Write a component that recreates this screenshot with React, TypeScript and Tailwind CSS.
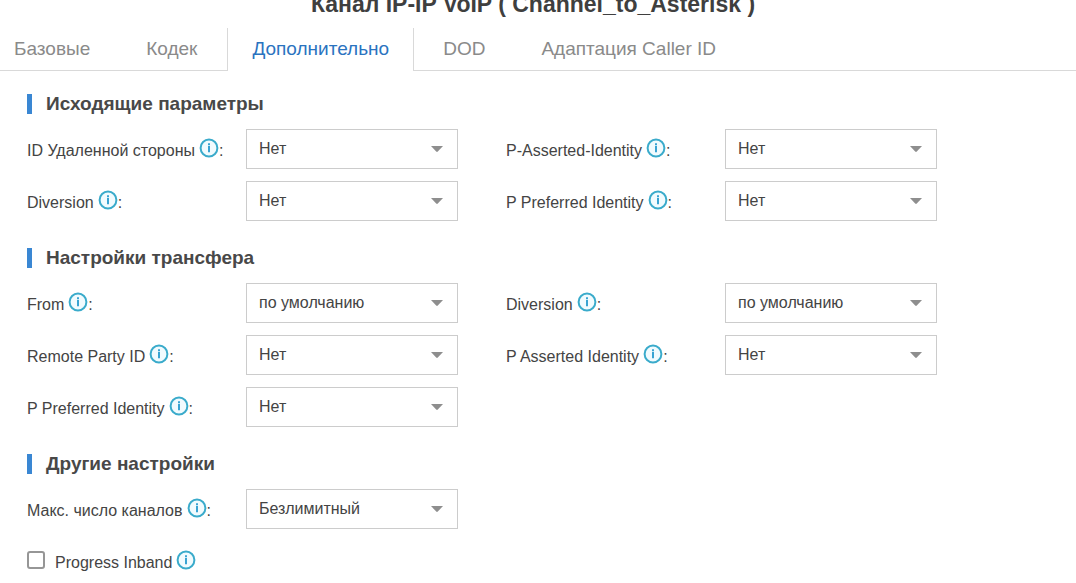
import React, { useId } from 'react';

function InfoIcon() {
  return (
    <svg className="mb-0.5 h-5 w-5 shrink-0" viewBox="0 0 20 20" fill="none" aria-hidden="true">
      <circle cx="10" cy="10" r="8.4" fill="#f1fbfe" stroke="#3aabcb" strokeWidth="2" />
      <path d="M10 7.8V14.2" stroke="#2f9fd0" strokeWidth="1.9" />
      <path d="M10 5.2V7" stroke="#2f9fd0" strokeWidth="1.9" />
    </svg>
  );
}

type FieldProps = { label: string; value: string };

const choices = ['Нет', 'по умолчанию', 'Безлимитный'];

function Field({ label, value }: FieldProps) {
  const id = useId();
  return (
    <div className="flex h-10 items-center">
      <div className="flex w-[219px] shrink-0 items-center whitespace-nowrap">
        <label htmlFor={id} className="pt-1 pr-1">{label}</label>
        <InfoIcon />
        <span className="pt-1">:</span>
      </div>
      <div className="relative min-w-0 flex-1">
        <select
          id={id}
          defaultValue={value}
          className="block h-10 w-full appearance-none border border-[#cccccc] bg-white pr-9 pl-3 text-base text-[#444444]"
        >
          {choices.map((choice) => (
            <option key={choice}>{choice}</option>
          ))}
        </select>
        <svg
          className="pointer-events-none absolute top-4 right-[15px] h-2 w-3"
          viewBox="0 0 12 8"
          aria-hidden="true"
        >
          <path d="M0 1H12L6.8 6.6Q6 7.4 5.2 6.6Z" fill="#8e8e8e" />
        </svg>
      </div>
    </div>
  );
}

function Section({ title, fields }: { title: string; fields: FieldProps[] }) {
  return (
    <section>
      <h2 className="mb-[15px] flex h-5 items-center border-l-5 border-[#3a87d3] pl-3.5 text-[19px] font-bold text-[#484848]">
        {title}
      </h2>
      <div className="grid grid-cols-2 gap-x-12 gap-y-3">
        {fields.map((field) => (
          <Field key={field.label} {...field} />
        ))}
      </div>
    </section>
  );
}

const tabs = ['Базовые', 'Кодек', 'Дополнительно', 'DOD', 'Адаптация Caller ID'];
const activeTab = 'Дополнительно';

const sections = [
  {
    title: 'Исходящие параметры',
    fields: [
      { label: 'ID Удаленной стороны', value: 'Нет' },
      { label: 'P-Asserted-Identity', value: 'Нет' },
      { label: 'Diversion', value: 'Нет' },
      { label: 'P Preferred Identity', value: 'Нет' },
    ],
  },
  {
    title: 'Настройки трансфера',
    fields: [
      { label: 'From', value: 'по умолчанию' },
      { label: 'Diversion', value: 'по умолчанию' },
      { label: 'Remote Party ID', value: 'Нет' },
      { label: 'P Asserted Identity', value: 'Нет' },
      { label: 'P Preferred Identity', value: 'Нет' },
    ],
  },
  {
    title: 'Другие настройки',
    fields: [{ label: 'Макс. число каналов', value: 'Безлимитный' }],
  },
];

export default function App() {
  return (
    <main className="bg-white font-['Liberation_Sans',Arial,sans-serif] text-base text-[#444444]">
      <header className="flex h-7 items-start justify-center overflow-hidden pr-2.5">
        <h1 className="-mt-2 text-[23px] leading-6 font-bold whitespace-nowrap text-[#3f3f3f]">
          Канал IP-IP VoIP ( Channel_to_Asterisk )
        </h1>
      </header>

      <div role="tablist" className="flex h-[43px] text-[19px] whitespace-nowrap">
        {tabs.map((tab, index) => (
          <button
            key={tab}
            type="button"
            role="tab"
            aria-selected={tab === activeTab}
            className={
              tab === activeTab
                ? 'border-x border-[#d9d9d9] px-6 text-[#2a73bf]'
                : index === 0
                  ? 'border-b border-[#d9d9d9] pr-7 pl-3.5 text-[#8a8a8a]'
                  : index === 1
                    ? 'border-b border-[#d9d9d9] pr-[30px] pl-7 text-[#8a8a8a]'
                    : 'border-b border-[#d9d9d9] pr-[27px] pl-[29px] text-[#8a8a8a]'
            }
          >
            {tab}
          </button>
        ))}
        <div className="flex-1 border-b border-[#d9d9d9]" />
      </div>

      <form className="flex flex-col gap-[27px] pt-[23px] pr-[139px] pl-[27px]">
        {sections.map((section) => (
          <Section key={section.title} {...section} />
        ))}
        <div className="-mt-[5px] flex h-5 items-center">
          <input
            id="progress-inband"
            type="checkbox"
            className="mb-0.5 h-[18px] w-[18px] appearance-none rounded-[3px] border-2 border-[#969696] bg-white checked:bg-[#3a87d3]"
          />
          <label htmlFor="progress-inband" className="pt-1 pr-1 pl-2.5">
            Progress Inband
          </label>
          <InfoIcon />
        </div>
      </form>
    </main>
  );
}
